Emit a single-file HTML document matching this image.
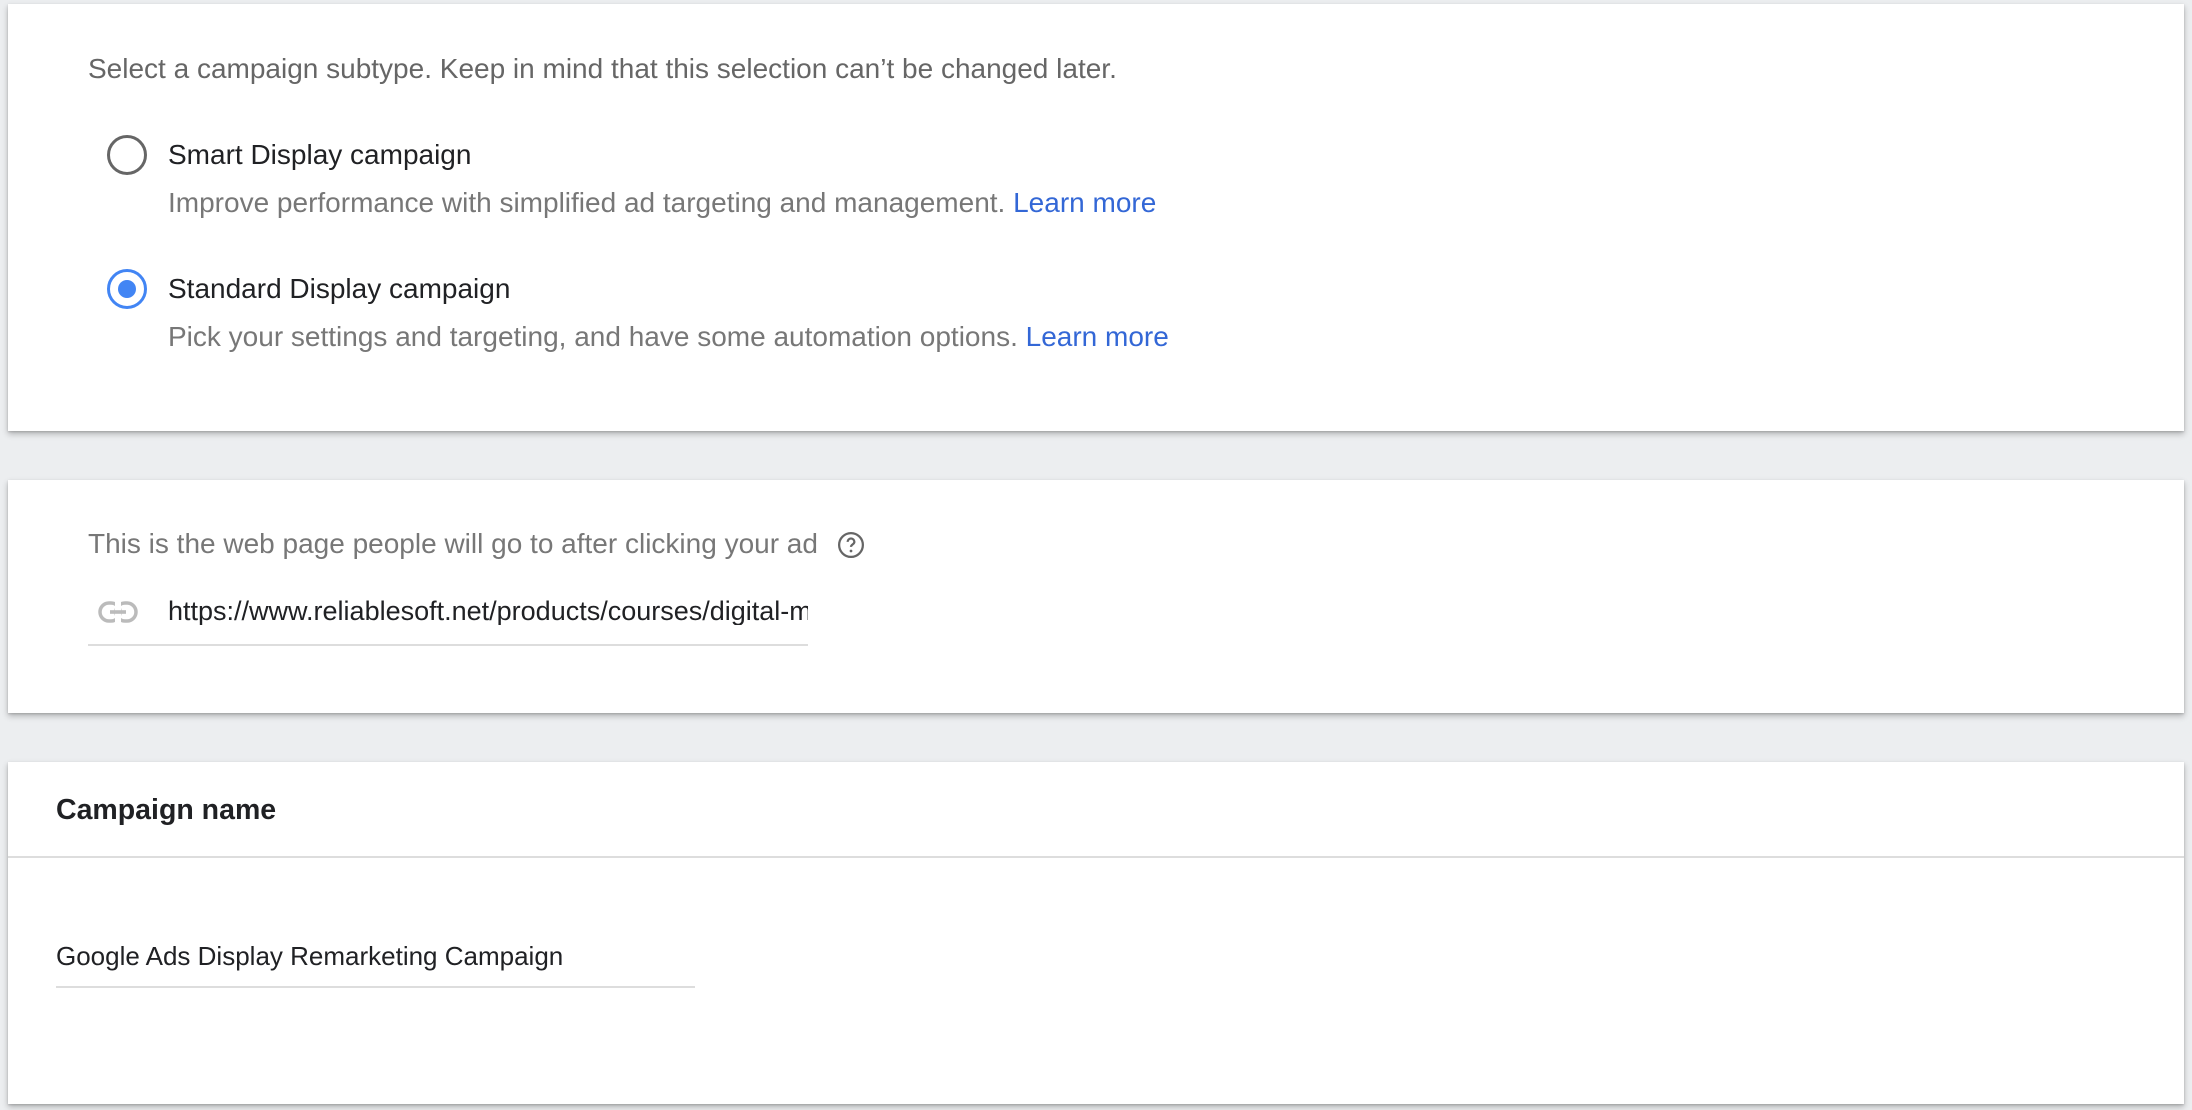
<!DOCTYPE html>
<html><head><style>
body{margin:0;width:2192px;height:1110px;background:#eceef0;font-family:"Liberation Sans",Arial,sans-serif;position:relative;overflow:hidden}
.card{position:absolute;left:8px;width:2176px;background:#fff;box-shadow:0 3px 6px rgba(0,0,0,.25),0 1px 2px rgba(0,0,0,.15)}
.t{position:absolute;white-space:nowrap;line-height:1}
.g{color:#666;font-size:28px}
.k{color:#202124;font-size:28px}
a{color:#3367d6;text-decoration:none}
.radio{position:absolute;width:40px;height:40px;border-radius:50%;box-sizing:border-box}
</style></head><body>
<div class="card" style="top:4px;height:427px">
  <div class="t g" style="left:80px;top:51px">Select a campaign subtype. Keep in mind that this selection can’t be changed later.</div>
  <div class="radio" style="left:99px;top:131px;border:3.5px solid #666"></div>
  <div class="t k" style="left:160px;top:137px">Smart Display campaign</div>
  <div class="t g" style="left:160px;top:185px;color:#777">Improve performance with simplified ad targeting and management. <a>Learn more</a></div>
  <div class="radio" style="left:99px;top:265px;border:3.5px solid #4285f4"><div style="position:absolute;left:7.5px;top:7.5px;width:18px;height:18px;border-radius:50%;background:#4285f4"></div></div>
  <div class="t k" style="left:160px;top:271px">Standard Display campaign</div>
  <div class="t g" style="left:160px;top:319px;color:#777">Pick your settings and targeting, and have some automation options. <a>Learn more</a></div>
</div>
<div class="card" style="top:480px;height:233px">
  <div class="t g" style="left:80px;top:50px;color:#777">This is the web page people will go to after clicking your ad</div>
  <svg style="position:absolute;left:828px;top:50px" width="30" height="30" viewBox="0 0 24 24"><circle cx="12" cy="12" r="9.5" fill="none" stroke="#666" stroke-width="1.8"/><path d="M9.3 9.5a2.7 2.7 0 0 1 5.4 0c0 2-2.7 2-2.7 4" fill="none" stroke="#666" stroke-width="1.8"/><circle cx="12" cy="16.8" r="1.1" fill="#666"/></svg>
  <svg style="position:absolute;left:90px;top:120px" width="40" height="24" viewBox="0 0 40 24"><rect x="2" y="3" width="20" height="18" rx="9" fill="none" stroke="#bbb" stroke-width="3.5"/><rect x="18" y="3" width="20" height="18" rx="9" fill="none" stroke="#bbb" stroke-width="3.5"/><rect x="17" y="1" width="6" height="22" fill="#fff"/><rect x="12" y="10.2" width="16" height="3.6" fill="#bbb"/></svg>
  <div class="t k" style="left:160px;top:118px;width:640px;overflow:hidden;font-size:27px">https://www.reliablesoft.net/products/courses/digital-marketing</div>
  <div style="position:absolute;left:80px;top:164px;width:720px;height:2px;background:#ddd"></div>
</div>
<div class="card" style="top:762px;height:342px">
  <div class="t" style="left:48px;top:34px;font-size:28.5px;font-weight:bold;color:#202124">Campaign name</div>
  <div style="position:absolute;left:0;top:94px;width:100%;height:2px;background:#ddd"></div>
  <div class="t k" style="left:48px;top:181px;font-size:26px">Google Ads Display Remarketing Campaign</div>
  <div style="position:absolute;left:48px;top:224px;width:639px;height:2px;background:#ddd"></div>
</div>
</body></html>
